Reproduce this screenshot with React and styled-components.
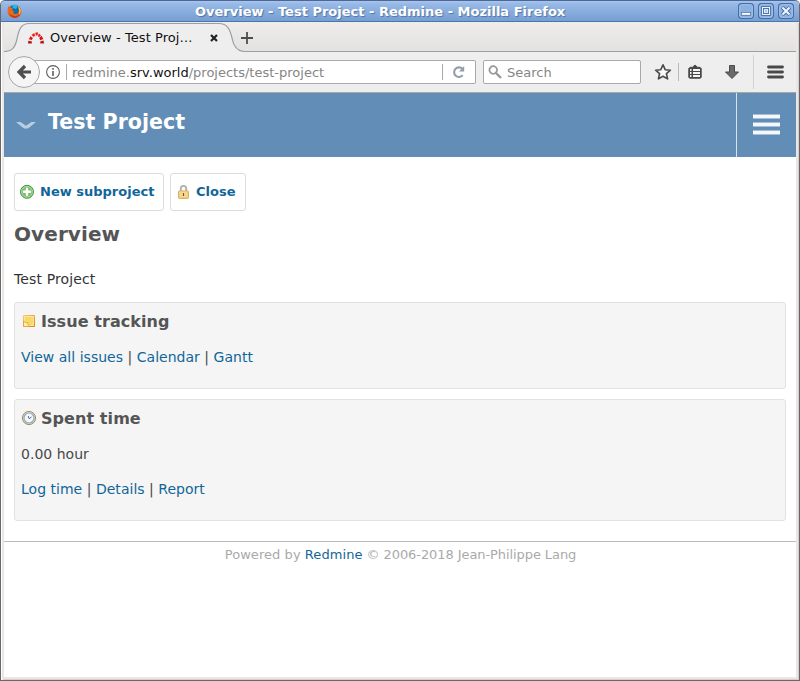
import React from 'react';
import styled, { createGlobalStyle } from 'styled-components';

const GlobalStyle = createGlobalStyle`
  *, *::before, *::after { box-sizing: border-box; }
  html, body { margin: 0; padding: 0; background: #fff; overflow: hidden; }
  body { font-family: "DejaVu Sans", Verdana, sans-serif; }
  svg { display: block; flex: none; }
  p, h1, h2, h3 { margin: 0; }
`;

const Window = styled.div`
  width: 800px;
  height: 681px;
  display: flex;
  flex-direction: column;
  background: #fff;
  border: 1px solid #6b6765;
  border-top: 0;
  border-radius: 5px 5px 0 0;
  overflow: hidden;
`;

const TitleBar = styled.header`
  height: 22px;
  flex: none;
  display: grid;
  grid-template-columns: 60px 1fr 62px;
  align-items: center;
  margin: 0 -1px;
  padding: 1px 0 0 6px;
  border: solid #4d6890;
  border-width: 1px 0 0 1px;
  border-bottom: 1px solid #4b75ae;
  border-radius: 5px 5px 0 0;
  background: linear-gradient(#a8c5ef 0, #97b8e6 3px, #779fd2 100%);
`;

const WindowTitle = styled.div`
  color: #fff;
  font-size: 13px;
  font-weight: bold;
  line-height: 19px;
  padding: 0 0 0 128px;
  white-space: nowrap;
  text-shadow: 1px 1px 1px #4e74a8;
`;

const WindowButtons = styled.div`
  display: flex;
  gap: 4px;
  padding-bottom: 2px;
`;

const Frame = styled.div`
  flex: 1;
  min-height: 0;
  display: flex;
  flex-direction: column;
  border: solid #e9e7e5;
  border-width: 0 2px 2px 2px;
  margin: 0 1px 1px 1px;
  box-shadow: 1px 1px 0 #d2d0cf;
`;

const TabStrip = styled.div`
  position: relative;
  height: 30px;
  flex: none;
  display: flex;
  background: linear-gradient(#eeedec, #e3e2e0);
  border-bottom: 1px solid #a19f9b;
`;

const TabShape = styled.svg`
  position: absolute;
  left: 0;
  top: 0;
`;

const TabContent = styled.div`
  position: relative;
  display: flex;
  align-items: center;
  width: 264px;
  height: 30px;
  padding: 2px 0 0 24px;
`;

const TabLabel = styled.span`
  width: 160px;
  margin-left: 6px;
  font-size: 13px;
  line-height: 16px;
  letter-spacing: 0.07px;
  color: #111;
  white-space: nowrap;
`;

const NewTabIcon = styled.svg`
  margin-left: 23px;
`;

const Toolbar = styled.div`
  height: 41px;
  flex: none;
  display: flex;
  align-items: center;
  padding: 0 0 0 4px;
  background: #eee;
  border-bottom: 1px solid #aaa6a2;
`;

const BackButton = styled.button`
  position: relative;
  z-index: 1;
  width: 32px;
  height: 32px;
  flex: none;
  padding: 0;
  display: grid;
  place-items: center;
  border: 1px solid #a8a8a8;
  border-radius: 50%;
  background: #f5f5f5;
`;

const Field = styled.div`
  width: ${(p) => p.$width}px;
  height: 24px;
  flex: none;
  display: flex;
  align-items: center;
  border: 1px solid #a9a9a9;
  border-radius: 2px;
  background: #fff;
  font-size: 13px;
  color: #858585;
`;

const AddressField = styled(Field)`
  margin-left: -7px;
  padding-left: 12px;
  border-left: 0;
`;

const SearchField = styled(Field)`
  margin-left: 7px;
  padding-left: 4px;
  gap: 5px;
`;

const Separator = styled.span`
  width: 1px;
  height: ${(p) => p.$height || 16}px;
  margin-left: ${(p) => p.$gap || 0}px;
  flex: none;
  background: ${(p) => p.$color || '#aaa'};
`;

const Address = styled.span`
  flex: 1;
  padding-left: 5px;
  white-space: nowrap;
  b { font-weight: normal; color: #111; }
`;

const ReloadSlot = styled.span`
  width: 32px;
  display: grid;
  place-items: center;
`;

const Actions = styled.div`
  flex: 1;
  display: grid;
  grid-template-columns: 30px 1px 31px 43px 1px 42px;
  align-items: center;
  justify-items: center;
  padding-left: 7px;
`;

const ProjectHeader = styled.div`
  height: 64px;
  flex: none;
  display: flex;
  background: #628db6;
  color: #fff;
`;

const ProjectName = styled.h1`
  flex: 1;
  display: flex;
  align-items: center;
  gap: 12px;
  padding: 0 0 7px 12px;
  font-size: 20.6px;
  line-height: 26px;
`;

const Chevron = styled.svg`
  margin-top: 8px;
`;

const MenuToggle = styled.div`
  width: 60px;
  border-left: 1px solid #dce3eb;
  display: flex;
  flex-direction: column;
  align-items: center;
  padding-top: 21px;
  gap: 3px;
`;

const MenuBar = styled.span`
  width: 27px;
  height: 5px;
  background: #f5f7fa;
  border: solid #a6bfd8;
  border-width: 1px 0;
`;

const Page = styled.main`
  flex: none;
  height: 384px;
  padding: 16px 10px 0;
  color: #484848;
`;

const ButtonRow = styled.div`
  display: flex;
  gap: 6px;
`;

const ActionButton = styled.a`
  width: ${(p) => p.$width}px;
  height: 38px;
  display: flex;
  align-items: center;
  gap: 5px;
  padding: 0 0 1px 5px;
  border: 1px solid #dcdcdc;
  border-radius: 3px;
  color: #116699;
  font-size: 13px;
  font-weight: bold;
  white-space: nowrap;
`;

const PageTitle = styled.h2`
  margin-top: 10px;
  font-size: 20px;
  line-height: 26px;
  letter-spacing: 0.1px;
  color: #555;
`;

const Description = styled.p`
  margin-top: 22px;
  font-size: 14px;
  line-height: 20px;
  letter-spacing: 0.13px;
  color: #333;
`;

const Box = styled.section`
  height: ${(p) => p.$height}px;
  margin-top: ${(p) => p.$top}px;
  padding: 8px 6px 0;
  background: #f5f5f5;
  border: 1px solid #e2e2e2;
  border-radius: 3px;
`;

const BoxTitle = styled.h3`
  display: flex;
  align-items: center;
  gap: 4px;
  font-size: 16px;
  line-height: 22px;
  letter-spacing: 0.07px;
  color: #555;
  & + p { margin-top: 14px; }
  svg { margin-top: -2px; }
`;

const BoxLine = styled.p`
  margin-top: 15px;
  font-size: 14px;
  line-height: 20px;
  letter-spacing: 0.02px;
  white-space: pre;
`;

const Link = styled.a`
  color: #116699;
`;

const Footer = styled.footer`
  border-top: 1px solid #bbb;
  padding: 4px 0 0 1px;
  text-align: center;
  font-size: 13px;
  line-height: 17px;
  color: #aaa;
`;

const FooterLead = styled.span`
  letter-spacing: 0.06px;
`;

const FooterOwner = styled.span`
  letter-spacing: -0.08px;
`;

const FirefoxIcon = () => (
  <svg width="15" height="15" viewBox="0 0 15 15">
    <circle cx="7.5" cy="7.2" r="6.4" fill="#176bb0" />
    <path d="M5 1.5Q8-.3 11 2L9 5 6 4Z" fill="#26bad9" />
    <path d="M1.4 2 3.4 3.5 6 4 4.8 6 7 7.2 6 9Q8.3 11 10.8 9.2 12.8 7 11.5 3.2L10.8 1.8Q15 4.4 14.3 8.5C13.5 15 3 16 .8 9.5Q.2 6 1.4 2" fill="#ee6a16" />
    <path d="M2 9Q5 13 10 11.8 13 10.6 13.5 7 14 13 8 14 3 13.5 2 9" fill="#ca3a20" />
    <path d="M11.1 2.3Q14.5 5 13.2 9.2L12 10.7Q13 7 11.1 2.3" fill="#ffcf3d" />
  </svg>
);

const glyphs = {
  minimize: <path d="M4 11.5h9" stroke="#fff" strokeWidth="2.2" />,
  maximize: <path d="M4.8 4.8h7.4v7.4H4.8zM7 7.2h3v2.6H7z" fill="none" stroke="#e9f1fd" strokeWidth="1.2" />,
  close: <path d="m4.8 4.8 7.4 7.4m0-7.4-7.4 7.4" stroke="#edf4ff" strokeWidth="2.3" />,
};

const WindowButton = ({ kind }) => (
  <svg width="16" height="16" viewBox="0 0 17 17">
    <rect x=".6" y=".6" width="15.8" height="15.8" rx="3.4" fill="#8bb0e2" stroke="#446da5" strokeWidth="1.2" />
    <rect x="1.8" y="1.8" width="13.4" height="13.4" rx="2.2" fill="none" stroke="#a5c4ed" />
    <g stroke="#3e659b" strokeWidth="3.6" fill="none">
      {kind === 'minimize' && <path d="M3.3 11.5h10.4" />}
      {kind === 'maximize' && <path d="M4.8 4.8h7.4v7.4H4.8z" strokeWidth="2.8" />}
      {kind === 'close' && <path d="m4.6 4.6 7.8 7.8m0-7.8-7.8 7.8" strokeWidth="4" />}
    </g>
    {glyphs[kind]}
  </svg>
);

const RedmineIcon = () => (
  <svg width="16" height="16" viewBox="0 0 16 16">
    <path d="M0 13.5.3 10.8l3.6.6-.1 2.1z" fill="#b61313" />
    <path d="m.8 9.2 1.7-3 2.4 1.7-1.1 2.2z" fill="#d91313" />
    <path d="m3.5 4.7 2.8-1.6.9 2.8-1.9.9z" fill="#f02020" />
    <path d="M7.4 2.5h2.8l-.8 3.1H7.8z" fill="#f01818" />
    <path d="m10.8 3.6 2.2 1.6-1.9 2-1.2-1z" fill="#ee1818" />
    <path d="m13.5 5.8 1.9 3.2-3.2 1.3-.9-2.4z" fill="#d91313" />
    <path d="m15.6 10.6.4 2.9h-3.6l-.2-2.1z" fill="#b61313" />
  </svg>
);

const PlusCircle = () => (
  <svg width="15" height="15" viewBox="0 0 15 15">
    <circle cx="7" cy="7.8" r="6.5" fill="#7cc06f" stroke="#469443" />
    <circle cx="7" cy="7.8" r="5.4" fill="none" stroke="#b1deaa" strokeWidth=".9" />
    <path d="M7 4.8v6M4 7.8h6" stroke="#fff" strokeWidth="2.4" strokeLinecap="round" />
  </svg>
);

const Padlock = () => (
  <svg width="15" height="15" viewBox="0 0 15 15">
    <path d="M4.8 7V4.6a2.7 2.7 0 0 1 5.4 0V7" fill="none" stroke="#b0b0b0" strokeWidth="1.9" />
    <rect x="2.5" y="6.9" width="10" height="7.5" rx=".8" fill="#efcc82" stroke="#dcac61" />
    <path d="M3.5 8.2h8M3.5 10.2h8M3.5 12.2h8" stroke="#ffe4a0" strokeWidth=".8" />
    <path d="M7.5 9v3" stroke="#765526" strokeWidth="1.1" />
  </svg>
);

const NoteIcon = () => (
  <svg width="16" height="16" viewBox="0 0 16 16">
    <defs>
      <linearGradient id="note-edge" x1="0" y1="0" x2="1" y2="1">
        <stop offset="0" stopColor="#f5c687" />
        <stop offset="1" stopColor="#df8417" />
      </linearGradient>
    </defs>
    <path d="M2.5 2.5h11v11h-11z" fill="#f6da67" stroke="url(#note-edge)" />
    <path d="M3.5 7.5v-4h9v9H8" fill="none" stroke="#fae797" />
    <path d="M2.5 8v5.5H8C8 11.5 6.5 12 6.8 9.5 4.5 9.8 4 9.4 2.5 8" fill="#fbedb8" stroke="#e4a13c" strokeWidth=".9" />
  </svg>
);

const ClockIcon = () => (
  <svg width="16" height="16" viewBox="0 0 16 16">
    <circle cx="8" cy="8" r="6.6" fill="#ead7a7" stroke="#aa8b56" strokeWidth="1" />
    <circle cx="8" cy="8" r="5" fill="#f1f8ff" stroke="#83addc" strokeWidth="1.2" />
    <path d="m7.2 6 .9 2.7L10.5 7" fill="none" stroke="#666" strokeWidth="1" />
  </svg>
);

const actionIcons = {
  star: <svg width="18" height="18" viewBox="0 0 18 18"><path d="m9 1.8 2.2 4.9 5.2.5-4 3.5 1.2 5.2L9 13.2l-4.6 2.7 1.2-5.2-4-3.5 5.2-.5z" fill="#fafafa" stroke="#494949" strokeWidth="1.6" strokeLinejoin="round" /></svg>,
  clipboard: <svg width="16" height="16" viewBox="0 0 16 16"><path d="M1.8 4.5 3 3.3h2.5L8 1l2.5 2.3H13l1.2 1.2v9L13 14.2H3l-1.2-.7z" fill="#494949" stroke="#494949" strokeLinejoin="round" /><path d="M3 6h1.5M6 6h7M3 9h1.5M6 9h7M3 12h1.5M6 12h7" stroke="#f5f5f5" strokeWidth="1.8" /></svg>,
  download: <svg width="16" height="16" viewBox="0 0 16 16"><path d="M5.5 1.5h5V8h4L8 14.5 1.5 8h4z" fill="#696969" stroke="#4b4b4b" strokeLinejoin="round" /></svg>,
  menu: <svg width="17" height="16" viewBox="0 0 17 16"><path d="M1.5 3h14m-14 5h14m-14 5h14" stroke="#484848" strokeWidth="2.8" strokeLinecap="round" /></svg>,
};

export default function App() {
  return (
    <>
      <GlobalStyle />
      <Window>
        <TitleBar>
          <FirefoxIcon />
          <WindowTitle>Overview - Test Project - Redmine - Mozilla Firefox</WindowTitle>
          <WindowButtons>
            <WindowButton kind="minimize" />
            <WindowButton kind="maximize" />
            <WindowButton kind="close" />
          </WindowButtons>
        </TitleBar>
        <Frame>
          <TabStrip>
            <TabShape width="246" height="30" viewBox="0 0 246 30">
              <path d="M0 29.5C8 29.5 11 26 13 17 15 6 18 1.5 25 1.5H215C223 1.5 226 7 228 16 230 26 234 29.5 241 29.5L241 30H0Z" fill="#eee" />
              <path d="M0 29.5C8 29.5 11 26 13 17 15 6 18 1.5 25 1.5H215C223 1.5 226 7 228 16 230 26 234 29.5 241 29.5" fill="none" stroke="#9b9fa3" strokeWidth="1.2" />
            </TabShape>
            <TabContent>
              <RedmineIcon />
              <TabLabel>Overview - Test Proj…</TabLabel>
              <svg width="8" height="8" viewBox="0 0 8 8"><path d="m1 1 6 6m0-6L1 7" stroke="#222" strokeWidth="2.2" /></svg>
              <NewTabIcon width="12" height="12" viewBox="0 0 12 12"><path d="M6 0v12M0 6h12" stroke="#4d4d4d" strokeWidth="1.8" /></NewTabIcon>
            </TabContent>
          </TabStrip>
          <Toolbar>
            <BackButton aria-label="Back">
              <svg width="16" height="16" viewBox="0 0 16 16"><path d="M15 8H4m5-6L3 8l6 6" fill="none" stroke="#4e4e4e" strokeWidth="3.2" /></svg>
            </BackButton>
            <AddressField $width={443}>
              <svg width="16" height="16" viewBox="0 0 16 16"><circle cx="8" cy="8" r="6.4" fill="none" stroke="#5e5e5e" strokeWidth="1.1" /><path d="M8 7v5M8 4v1.7" stroke="#555" strokeWidth="1.5" /></svg>
              <Separator $gap={5} />
              <Address>redmine.<b>srv.world</b>/projects/test-project</Address>
              <Separator />
              <ReloadSlot>
                <svg width="14" height="14" viewBox="0 0 14 14"><path d="M10.7 10.2A4.8 4.8 0 1 1 10.5 4" fill="none" stroke="#929da9" strokeWidth="2.1" /><path d="M12.2 1v5.5H7z" fill="#929da9" /></svg>
              </ReloadSlot>
            </AddressField>
            <SearchField $width={158}>
              <svg width="14" height="14" viewBox="0 0 14 14"><circle cx="5.2" cy="5" r="3.8" fill="none" stroke="#999" strokeWidth="1.8" /><path d="m8 8 5 5" stroke="#999" strokeWidth="2.4" /></svg>
              <span>Search</span>
            </SearchField>
            <Actions>
              {actionIcons.star}
              <Separator $height={18} $color="#bbb" />
              {actionIcons.clipboard}
              {actionIcons.download}
              <Separator $height={34} $color="#d2d2d2" />
              {actionIcons.menu}
            </Actions>
          </Toolbar>
          <ProjectHeader>
            <ProjectName>
              <Chevron width="20" height="9" viewBox="0 0 20 9"><path d="M0 1h4.5L10 4.8 15.5 1H20L12 7.6H8z" fill="#b9cee1" /></Chevron>
              Test Project
            </ProjectName>
            <MenuToggle><MenuBar /><MenuBar /><MenuBar /></MenuToggle>
          </ProjectHeader>
          <Page>
            <ButtonRow>
              <ActionButton $width={150}><PlusCircle />New subproject</ActionButton>
              <ActionButton $width={76}><Padlock />Close</ActionButton>
            </ButtonRow>
            <PageTitle>Overview</PageTitle>
            <Description>Test Project</Description>
            <Box $height={87} $top={13}>
              <BoxTitle><NoteIcon />Issue tracking</BoxTitle>
              <BoxLine><Link>View all issues</Link> | <Link>Calendar</Link> | <Link>Gantt</Link></BoxLine>
            </Box>
            <Box $height={122} $top={10}>
              <BoxTitle><ClockIcon />Spent time</BoxTitle>
              <BoxLine>0.00 hour</BoxLine>
              <BoxLine><Link>Log time</Link> | <Link>Details</Link> | <Link>Report</Link></BoxLine>
            </Box>
          </Page>
          <Footer><FooterLead>Powered by <Link>Redmine</Link></FooterLead><FooterOwner> © 2006-2018 Jean-Philippe Lang</FooterOwner></Footer>
        </Frame>
      </Window>
    </>
  );
}
